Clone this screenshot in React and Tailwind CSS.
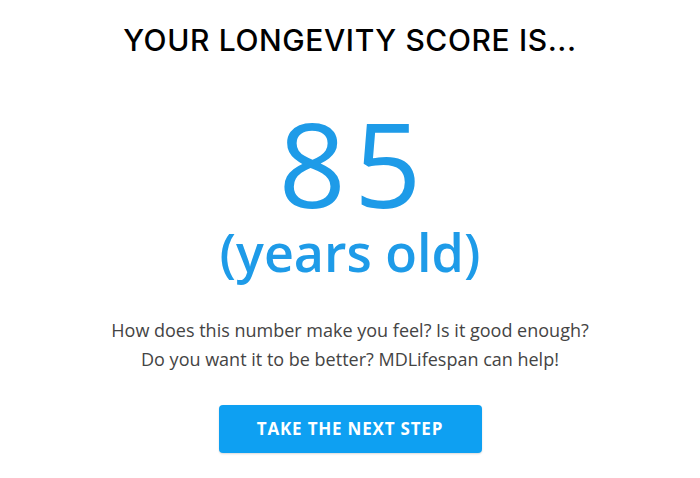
import React from 'react';

const App = () => {
  return (
    <div className="w-[700px] h-[478px] bg-white flex flex-col items-center font-['Open_Sans','Liberation_Sans',sans-serif]">
      {/* Heading */}
      <h1 className="mt-[22px] text-[30px] leading-[36px] font-medium text-black tracking-[0.6px] font-['Inter','Liberation_Sans',sans-serif]">
        YOUR LONGEVITY SCORE IS...
      </h1>

      {/* Score */}
      <div className="mt-[60px] text-[#1e9be8] text-[118px] leading-[90px] tracking-[8px] pl-[8px]">
        85
      </div>
      <div className="mt-[12px] text-[#1e9be8] text-[52px] leading-[64px] font-semibold">
        (years old)
      </div>

      {/* Copy */}
      <p className="mt-[32px] text-center text-[#444444] text-[18px] leading-[29px]">
        How does this number make you feel? Is it good enough?
        <br />
        Do you want it to be better? MDLifespan can help!
      </p>

      {/* CTA */}
      <button className="mt-[31px] w-[263px] h-[48px] rounded-[4px] bg-[#0ea0f2] text-white text-[17px] font-bold tracking-[0.8px] shadow-[0_1px_2px_rgba(0,0,0,0.15)]">
        TAKE THE NEXT STEP
      </button>
    </div>
  );
};

export default App;
